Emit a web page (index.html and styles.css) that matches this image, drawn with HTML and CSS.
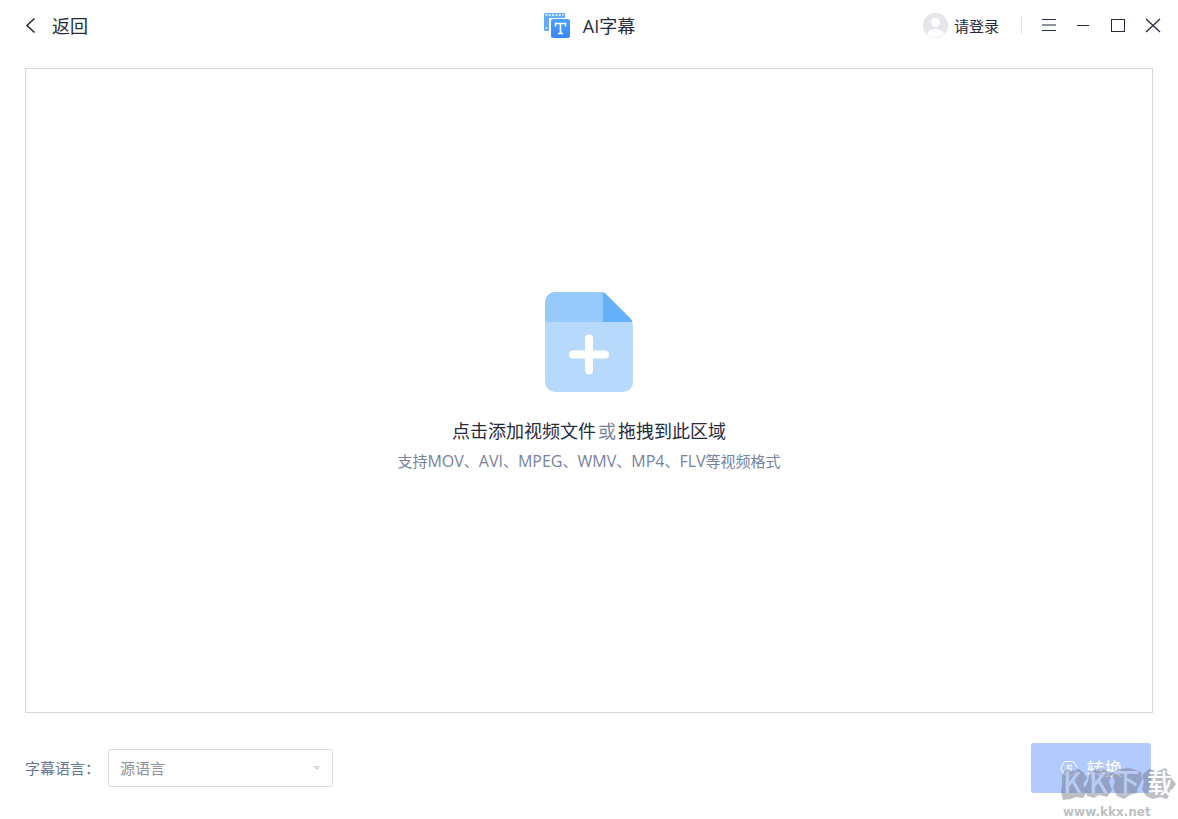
FILE: index.html
```html
<!DOCTYPE html>
<html lang="zh-CN">
<head>
<meta charset="utf-8">
<meta name="viewport" content="width=device-width, initial-scale=1">
<title>AI字幕</title>
<link rel="stylesheet" href="styles.css">
</head>
<body>
<div class="app">
  <header class="topbar">
    <button class="back" type="button">
      <svg width="12" height="18" viewBox="0 0 12 18" fill="none" stroke="#1f2433" stroke-width="1.5"><path d="M10.500 1.500 3 8.500l7.500 7"/></svg>
      <span>返回</span>
    </button>
    <h1 class="title">
      <svg width="28" height="28" viewBox="0 0 28 28">
        <defs><linearGradient id="tile" x1="0" y1="0" x2="0" y2="1"><stop offset="0" stop-color="#4ba0fd"/><stop offset="1" stop-color="#3688fb"/></linearGradient></defs>
        <path d="M2.500 1H22v5H6v13H2.500A1.500 1.500 0 0 1 1 17.500V2.500A1.500 1.500 0 0 1 2.500 1Z" fill="#62aefb"/>
        <path d="M2.500 3h18" stroke="#fff" stroke-width="1.600" stroke-dasharray="2 1.300"/>
        <path d="M3.500 15v2" stroke="#d6eaff" stroke-width="1.500"/>
        <rect x="8" y="7" width="19" height="19" rx="2" fill="url(#tile)"/>
        <path d="M12.500 14.500V11.500h10v3M17.500 11.500v10M15 21.500h5" fill="none" stroke="#fff" stroke-width="1.600"/>
      </svg>
      <span>AI字幕</span>
    </h1>
    <div class="actions">
      <button class="login" type="button">
        <svg width="25" height="25" viewBox="0 0 25 25"><defs><clipPath id="face"><circle cx="12.500" cy="12.500" r="12.500"/></clipPath></defs><g clip-path="url(#face)"><path fill="#e4e6e9" d="M0 0h25v25H0z"/><circle cx="12.500" cy="9.500" r="4.700" fill="#fff"/><ellipse cx="12.500" cy="21.500" rx="8.500" ry="5.500" fill="#fff"/></g><circle cx="12.500" cy="12.500" r="12" fill="none" stroke="#e4e6e9" stroke-opacity=".5"/></svg>
        <span>请登录</span>
      </button>
      <span class="divider"></span>
      <div class="window-controls">
        <button type="button" aria-label="菜单"><svg width="16" height="16" viewBox="0 0 16 16" stroke="#252b3d"><path d="M2 1.500h14M2 12.500h14"/><path d="M2 7h14" stroke="#8d91a0" stroke-width="2"/></svg></button>
        <button type="button" aria-label="最小化"><svg width="16" height="16" viewBox="0 0 16 16" stroke="#252b3d"><path d="M2 7.500h12"/></svg></button>
        <button type="button" aria-label="最大化"><svg width="16" height="16" viewBox="0 0 16 16" fill="none" stroke="#252b3d"><rect x="1.500" y="1.500" width="13" height="12"/></svg></button>
        <button type="button" aria-label="关闭"><svg width="16" height="16" viewBox="0 0 16 16" stroke="#252b3d" stroke-width="1.300"><path d="m1 1 14 13M15 1 1 14"/></svg></button>
      </div>
    </div>
  </header>

  <main class="drop">
    <button class="add" type="button">
      <svg width="88" height="100" viewBox="0 0 88 100">
        <path d="M0 30h87q1 1.500 1 4v56a10 10 0 0 1-10 10H10A10 10 0 0 1 0 90Z" fill="#b7dafc"/>
        <path d="M0 30V10A10 10 0 0 1 10 0h48v30Z" fill="#95cafb"/>
        <path d="M58 0q2 1 4 3l22 22q3 3 3.500 5H58Z" fill="#64b0f9"/>
        <path d="M44 46.500v32M28 62.500h32" stroke="#fff" stroke-width="8" stroke-linecap="round"/>
      </svg>
      <span class="add-text"><span>点击添加视频文件</span><span class="or">或</span><span>拖拽到此区域</span></span>
    </button>
    <p class="formats">支持<span class="ext">MOV</span>、<span class="ext">AVI</span>、<span class="ext">MPEG</span>、<span class="ext">WMV</span>、<span class="ext">MP4</span>、<span class="ext">FLV</span>等视频格式</p>
  </main>

  <footer class="bottom">
    <div class="field">
      <label for="lang">字幕语言：</label>
      <select class="lang" id="lang"><option>源语言</option></select>
    </div>
    <button class="convert" type="button">
      <svg width="18" height="18" viewBox="0 0 18 18" fill="none" stroke="#edf3ff"><path d="M5.500 1.500h7q1 0 1.500.8l3 5q.6 1 0 1.900l-3 4.500q-.5.700-1.300 1L9 16.500l-3.700-1.800q-.8-.3-1.300-1L1 9.200q-.6-.9 0-1.900l3-5q.5-.8 1.500-.8Z" stroke-width="1.200"/><path d="M12 5.500H7.500v2.700h3.500v3H6" stroke-width="1.600"/></svg>
      <span>转换</span>
    </button>
  </footer>

  <div class="watermark">
    <svg class="stamp" width="118" height="34" viewBox="0 0 118 34">
      <g fill="#686e78" fill-opacity=".44">
        <path d="m2 8 4-5 8 1 3-3 6 4 4 6-4 6 4 8-4 6-7-1-5 2-8 1-2-8 1-7Z"/>
        <path d="m30 5 7-3 9 1 6 4-3 8 3 8-5 7-8-2-5 3-7-2-2-8 3-7Z"/>
        <path d="m51 6 8-4 11-1 11 4 1 8-4 8-1 5-7 2-6 4-7-3-4-8 2-7Z"/>
        <path d="m82 8 7-6 9 2 7-3 5 5 2 6 4 5-4 6-5 9-7-2-7 2-7-3-4-7 2-7Z"/>
      </g>
      <g class="mark">
        <text x="3" y="26" class="mark-k">K</text><text x="29" y="26" class="mark-k">K</text><text x="52" y="26" class="mark-k">下</text><text x="87" y="26" class="mark-last">载</text>
      </g>
    </svg>
    <span class="site">www.kkx.net</span>
  </div>
</div>
</body>
</html>
```
FILE: styles.css
```css
* { box-sizing: border-box; }
body {
  margin: 0;
  background: #fff;
  color: #252b3d;
  font: 400 15px/20px "Open Sans", "Noto Sans CJK SC", sans-serif;
}
button {
  padding: 0;
  border: 0;
  background: none;
  color: inherit;
  font: inherit;
  cursor: pointer;
}
svg { display: block; flex: none; }
.app {
  position: relative;
  display: flex;
  flex-direction: column;
  min-height: 100vh;
}
.topbar {
  display: grid;
  grid-template-columns: 1fr auto 1fr;
  align-items: center;
  height: 51px;
  padding: 0 17px;
}
.back {
  display: flex;
  align-items: center;
  justify-self: start;
  gap: 16px;
  padding-left: 7px;
  font-size: 18px;
}
.title {
  display: flex;
  align-items: center;
  gap: 12px;
  margin: 0;
  font-size: 18px;
  font-weight: 400;
}
.actions {
  display: flex;
  align-items: center;
  justify-self: end;
}
.login {
  display: flex;
  align-items: center;
  gap: 6px;
}
.divider {
  width: 1px;
  height: 17px;
  margin: 0 18px 0 22px;
  background: #dfe1e8;
}
.window-controls {
  display: flex;
  gap: 19px;
}
.drop {
  display: flex;
  flex: 1;
  flex-direction: column;
  align-items: center;
  justify-content: center;
  gap: 8px;
  margin: 17px 25px 0;
  padding-bottom: 18px;
  border: 1px solid #d7d8df;
}
.add {
  display: flex;
  flex-direction: column;
  align-items: center;
  gap: 27px;
  font-size: 18px;
  line-height: 24px;
}
.add-text { display: flex; gap: 2px; }
.or { color: #7782a0; }
.formats {
  margin: 0;
  color: #7782a0;
}
.ext { font-size: 16px; }
.bottom {
  display: flex;
  align-items: center;
  justify-content: space-between;
  padding: 30px 27px 26px 25px;
}
.field {
  display: flex;
  align-items: center;
  gap: 8px;
  color: #66759a;
}
.lang {
  width: 225px;
  height: 38px;
  padding: 0 11px;
  border: 1px solid #d9dbe6;
  border-radius: 3px;
  appearance: none;
  background-color: #fff;
  background-image: linear-gradient(to top right, transparent 50%, #d9dbe6 50%), linear-gradient(to top left, transparent 50%, #d9dbe6 50%);
  background-position: right 15px center, right 11px center;
  background-repeat: no-repeat;
  background-size: 4px 4px;
  color: #8d9097;
  font: inherit;
}
.convert {
  display: flex;
  align-items: center;
  justify-content: center;
  gap: 9px;
  width: 120px;
  height: 50px;
  padding-top: 1px;
  border-radius: 3px;
  background: #b3caff;
  color: #fff;
  font-size: 18px;
}
.watermark {
  position: absolute;
  right: 0;
  bottom: 0;
  width: 118px;
  pointer-events: none;
}
.stamp { overflow: visible; }
.mark {
  fill: #fff;
  font-family: "Noto Sans CJK SC", sans-serif;
}
.mark-k {
  fill: #b9cbf5;
  font-size: 28px;
  font-weight: 500;
}
.mark-last { font-size: 26px; font-weight: 500; }
.site {
  display: block;
  padding: 4px 0 0 3px;
  color: #bfbfc1;
  font: bold 12px/14px "DejaVu Sans", sans-serif;
}
```
